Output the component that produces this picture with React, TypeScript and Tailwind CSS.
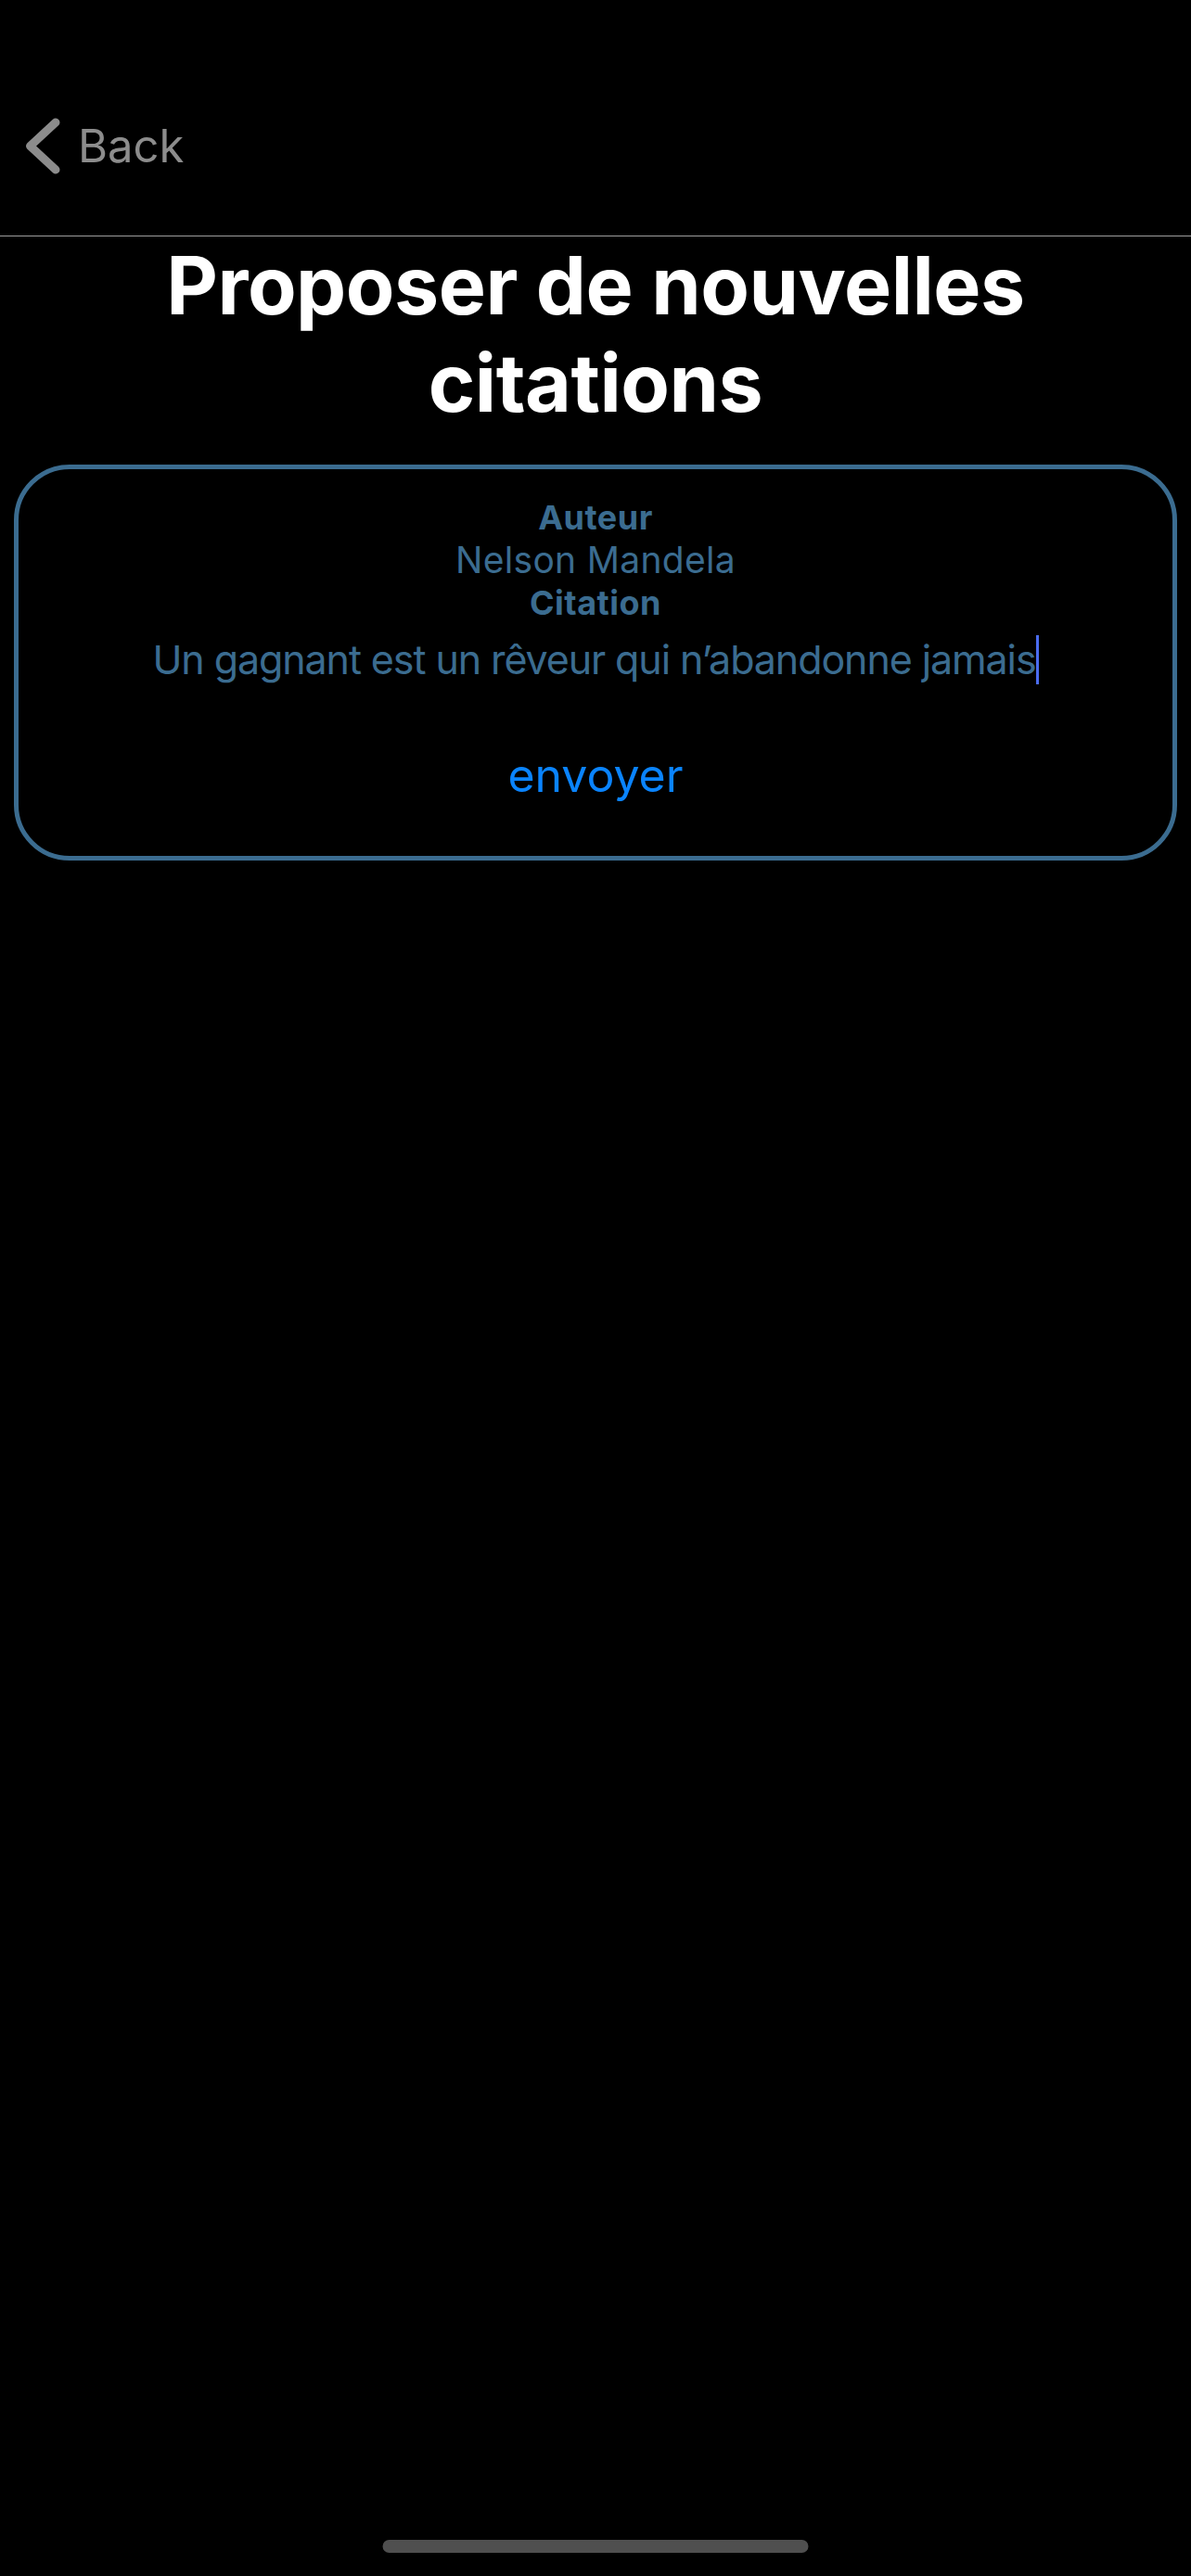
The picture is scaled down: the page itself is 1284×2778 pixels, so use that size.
import React from "react";

export default function App() {
  return (
    <div
      className="relative min-h-[2778px] w-full bg-black"
      style={{ fontFamily: "Inter, 'Noto Sans', sans-serif" }}
    >
      <header className="h-[255px] border-b border-[#9e9e9e] pt-[120px]">
        <div className="flex h-[74px] items-center pl-[28px]">
          <svg width="37" height="61" viewBox="0 0 37 61" fill="none">
            <path
              d="M32 5 L4.5 30.5 L32 56"
              stroke="#8c8c8c"
              strokeWidth="9"
              strokeLinecap="round"
              strokeLinejoin="round"
            />
          </svg>
          <span className="ml-[19px] text-[49px] leading-none text-[#8c8c8c]">Back</span>
        </div>
      </header>

      <h1 className="mt-[1px] px-[40px] text-center text-[86px] font-bold leading-[105px] tracking-[-0.5px] text-white">
        Proposer de nouvelles citations
      </h1>

      <div className="mx-[15px] mt-[35px] rounded-[60px] border-[5px] border-[#3b6c90] pt-[29px] pb-[56px] text-center text-[#3b6c90]">
        <div className="text-[36px] font-bold leading-[46px] tracking-[0.5px]">Auteur</div>
        <div className="text-[39px] leading-[46px] tracking-[0.3px]">Nelson Mandela</div>
        <div className="text-[36px] font-bold leading-[46px] tracking-[0.5px]">Citation</div>
        <div className="mt-[10px] flex h-[56px] items-center justify-center">
          <span className="text-[43px] leading-[56px] tracking-[-1.1px]">
            Un gagnant est un rêveur qui n’abandonne jamais
          </span>
          <span className="inline-block h-[53px] w-[3px] bg-[#4a6cf0]" />
        </div>
        <div className="mt-[66px] text-[50px] leading-[62px] text-[#0a84ff]">envoyer</div>
      </div>

      <div className="absolute bottom-[25px] left-1/2 h-[14px] w-[459px] -translate-x-1/2 rounded-full bg-[#4f4f4f]" />
    </div>
  );
}
